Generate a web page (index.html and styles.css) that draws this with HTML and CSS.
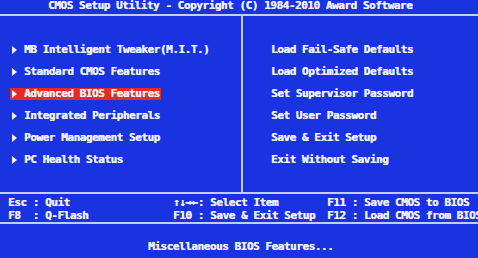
FILE: index.html
```html
<!DOCTYPE html>
<html lang="en">
<head>
	<meta charset="UTF-8">
	<title>CMOS Setup Utility</title>
	<link rel="stylesheet" href="styles.css">
</head>
<body>
	<div id="screen">
		<div class="title">CMOS Setup Utility - Copyright (C) 1984-2010 Award Software</div>
		<div class="main">
			<ul class="menu left">
				<li><span class="item">MB Intelligent Tweaker(M.I.T.)</span></li>
				<li><span class="item">Standard CMOS Features</span></li>
				<li><span class="item active">Advanced BIOS Features</span></li>
				<li><span class="item">Integrated Peripherals</span></li>
				<li><span class="item">Power Management Setup</span></li>
				<li><span class="item">PC Health Status</span></li>
			</ul>
			<ul class="menu right">
				<li>Load Fail-Safe Defaults</li>
				<li>Load Optimized Defaults</li>
				<li>Set Supervisor Password</li>
				<li>Set User Password</li>
				<li>Save &amp; Exit Setup</li>
				<li>Exit Without Saving</li>
			</ul>
		</div>
		<div class="keys">
			<span>Esc : Quit</span>
			<span>&uarr;&darr;&rarr;&larr;: Select Item</span>
			<span>F11 : Save CMOS to BIOS</span>
			<span>F8  : Q-Flash</span>
			<span>F10 : Save &amp; Exit Setup</span>
			<span>F12 : Load CMOS from BIOS</span>
		</div>
		<div class="help">Miscellaneous BIOS Features...</div>
	</div>
</body>
</html>
```

FILE: styles.css
```css
*{margin:0;padding:0;list-style:none;box-sizing:border-box;}
html,body{width:478px;height:258px;overflow:hidden;}
body{background:#1a33e0;color:#eef0fb;font-family:"DejaVu Sans Mono","Liberation Mono",monospace;font-weight:bold;font-size:11px;letter-spacing:-0.45px;text-shadow:0.4px 0 0 #eef0fb;}
#screen{display:flex;flex-direction:column;height:258px;}
.title{height:14px;line-height:12px;padding-left:48px;white-space:pre;}
.main{display:flex;height:180px;border-top:2px solid #c2ccff;border-bottom:2px solid #c2ccff;}
.menu{padding-top:23px;}
.menu li{display:flex;align-items:center;height:22px;line-height:22px;white-space:pre;}
.left{width:243px;border-right:2px solid #c2ccff;padding-left:10px;}
.right{flex:1;padding-left:28px;}
.item{display:flex;align-items:center;height:12px;line-height:12px;padding:0 1px 0 2px;}
.item::before{content:"";border-left:5px solid #eef0fb;border-top:4px solid transparent;border-bottom:4px solid transparent;margin-right:7px;}
.item.active{background:#e82a22;}
.keys{display:grid;grid-template-columns:165px 154px 1fr;height:30px;padding:3px 0 0 8px;border-bottom:2px solid #c2ccff;line-height:11px;white-space:pre;}
.help{padding:17px 0 0 148px;line-height:12px;white-space:pre;}
```
